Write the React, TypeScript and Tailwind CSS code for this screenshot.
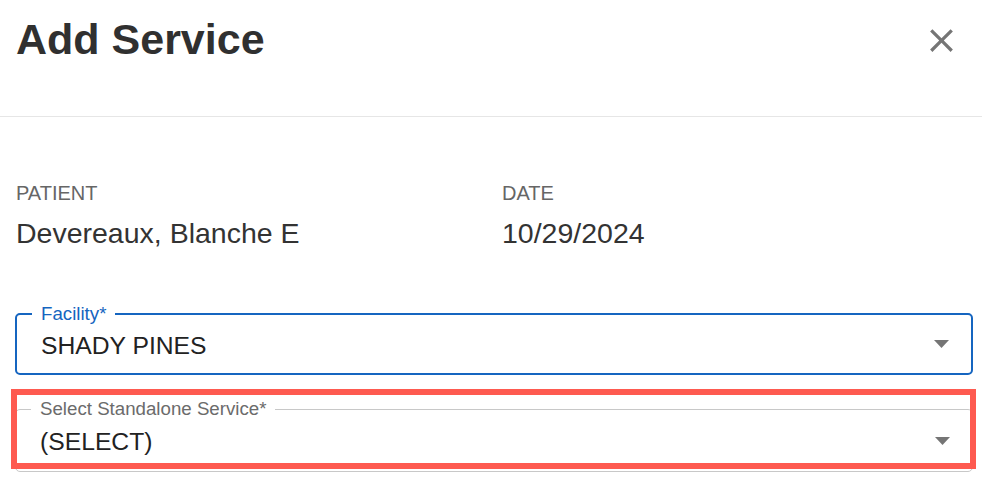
import React from 'react';

function CloseIcon() {
  return (
    <svg viewBox="0 0 24 24" className="w-[39px] h-[39px] fill-[#757575]">
      <path d="M19 6.41 17.59 5 12 10.59 6.41 5 5 6.41 10.59 12 5 17.59 6.41 19 12 13.41 17.59 19 19 17.59 13.41 12z" />
    </svg>
  );
}

function Caret() {
  return (
    <svg viewBox="0 0 15 8" className="w-[15px] h-[8px] fill-[#757575] shrink-0">
      <polygon points="0,0 15,0 7.5,8" />
    </svg>
  );
}

interface FieldProps {
  label: string;
  value: string;
  focused?: boolean;
  highlight?: boolean;
}

function SelectField({ label, value, focused, highlight }: FieldProps) {
  return (
    <div
      className={`relative flex items-center justify-between rounded-[5px] pl-[24px] pr-[22px] ${
        focused ? 'h-[62px] border-2 border-[#1565c0]' : 'h-[63px] border border-[#c8c8c8]'
      }`}
    >
      {/* notched label */}
      <span
        className={`absolute -top-[12px] bg-white px-[9px] text-[18.7px] leading-[22px] ${
          focused ? 'left-[15px] text-[#1565c0]' : 'left-[15px] text-[#6b6b6b]'
        }`}
      >
        {label}
      </span>
      <span className="text-[24.7px] leading-[30px] text-[#222] pt-[3px]">{value}</span>
      <Caret />
      {highlight && (
        <div className="absolute -left-[5px] -right-[4px] -top-[21px] bottom-[2px] border-[6px] border-[#fe5a50] pointer-events-none" />
      )}
    </div>
  );
}

export default function App() {
  return (
    <div className="w-[982px] h-[480px] bg-white overflow-hidden font-['Liberation_Sans',Arial,sans-serif]">
      {/* Header */}
      <div className="h-[117px] flex items-start justify-between pl-4 pr-[21px] pt-[14px] border-b border-[#e6e6e6]">
        <h1 className="text-[43px] leading-[50px] font-bold text-[#303030]">Add Service</h1>
        <button className="mt-[7px]">
          <CloseIcon />
        </button>
      </div>

      {/* Patient / Date */}
      <div className="grid grid-cols-[486px_1fr] pl-4 pt-[64px]">
        <div className="flex flex-col gap-[12px]">
          <div className="text-[20px] leading-[24px] uppercase text-[#666]">Patient</div>
          <div className="text-[28.5px] leading-[32px] text-[#333]">Devereaux, Blanche E</div>
        </div>
        <div className="flex flex-col gap-[12px]">
          <div className="text-[20px] leading-[24px] uppercase text-[#666]">Date</div>
          <div className="text-[28.5px] leading-[32px] text-[#333]">10/29/2024</div>
        </div>
      </div>

      {/* Fields */}
      <div className="flex flex-col gap-[34px] pl-[15px] pr-[9px] pt-[64px]">
        <SelectField label="Facility*" value="SHADY PINES" focused />
        <SelectField label="Select Standalone Service*" value="(SELECT)" highlight />
      </div>
    </div>
  );
}
